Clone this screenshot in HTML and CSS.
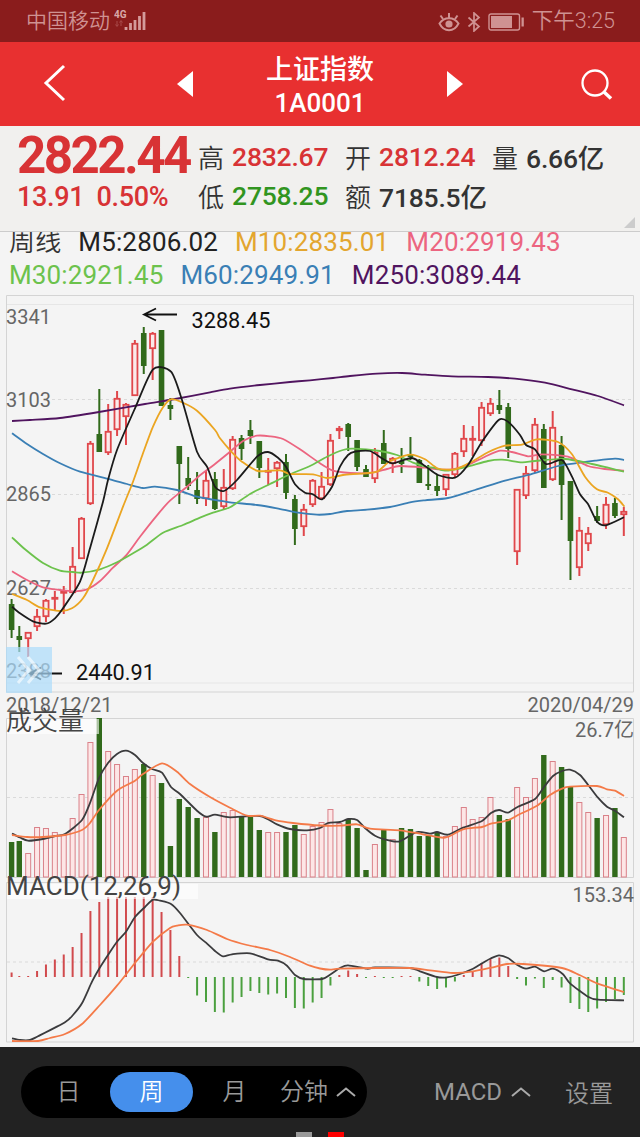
FILE: index.html
```
<!DOCTYPE html>
<html lang="zh-CN">
<head>
    <meta charset="UTF-8">
    <meta name="viewport" content="width=device-width, initial-scale=1.0">
    <title>上证指数 1A0001</title>
    <link rel="stylesheet" href="styles.css">
</head>
<body>
    <div class="status-bar">
        <div class="status-left">
            <span>中国移动</span>
            <svg class="signal" width="34" height="24" viewBox="0 0 34 24">
                <text x="0" y="10" class="signal-type">4G</text>
                <path d="M3 13v5M1.500 16.500l1.500 2 1.500-2M7 18v-5M5.500 14.500l1.500-2 1.500 2" class="signal-data"/>
                <path d="M12 19v3M16.500 15v7M21 12v10M25.500 8v14M30 4v18" class="signal-bars"/>
            </svg>
        </div>
        <div class="status-right">
            <svg width="22" height="20" viewBox="0 0 22 20" fill="none" stroke="currentColor" stroke-width="2">
                <path d="M1.500 11.500C6 4.500 16 4.500 20.500 11.500C16 20.500 6 20.500 1.500 11.500Z"/>
                <circle cx="11" cy="12" r="3.600" fill="currentColor" stroke="none"/>
                <path d="M11 6V1M5 7L2.500 3.500M17 7l2.500-3.500"/>
            </svg>
            <svg width="14" height="20" viewBox="0 0 14 20" fill="none" stroke="currentColor" stroke-width="1.700">
                <path d="M1.500 5.500L12 14.500L7 19V1L12 5.500L1.500 14.500"/>
            </svg>
            <svg class="battery" width="37" height="18" viewBox="0 0 37 18">
                <rect x="1" y="1" width="30.500" height="16" rx="2" fill="none" stroke="currentColor" stroke-width="1.400"/>
                <rect x="3" y="3" width="21" height="12" fill="currentColor"/>
                <rect x="33.500" y="4.500" width="2.300" height="9" fill="currentColor"/>
            </svg>
            <span>下午3:25</span>
        </div>
    </div>

    <div class="title-bar">
        <svg class="back" width="24" height="40" viewBox="0 0 24 40"><path d="M21 3L3 20L21 37"/></svg>
        <svg class="prev" width="18" height="28" viewBox="0 0 18 28"><path d="M17 1v26L1 14z"/></svg>
        <div class="title">
            <div class="title-name">上证指数</div>
            <div class="title-code">1A0001</div>
        </div>
        <svg class="next" width="18" height="28" viewBox="0 0 18 28"><path d="M1 1v26L17 14z"/></svg>
        <svg class="search" width="34" height="34" viewBox="0 0 34 34">
            <circle cx="15" cy="15" r="12.500"/>
            <path d="M24 24l7 6.500" class="handle"/>
        </svg>
    </div>

    <div class="quote">
        <div class="quote-main">
            <div class="price">2822.44</div>
            <div class="change"><span>13.91</span><span>0.50%</span></div>
        </div>
        <div class="quote-grid">
            <div class="item"><span>高</span><b class="up">2832.67</b></div>
            <div class="item"><span>开</span><b class="up">2812.24</b></div>
            <div class="item"><span>量</span><b>6.66亿</b></div>
            <div class="item"><span>低</span><b class="down">2758.25</b></div>
            <div class="item"><span>额</span><b>7185.5亿</b></div>
        </div>
        <div class="expand"></div>
    </div>

    <div class="legend">
        <div class="legend-row">
            <span class="period">周线</span>
            <span class="m5">M5:2806.02</span>
            <span class="m10">M10:2835.01</span>
            <span class="m20">M20:2919.43</span>
        </div>
        <div class="legend-row">
            <span class="m30">M30:2921.45</span>
            <span class="m60">M60:2949.91</span>
            <span class="m250">M250:3089.44</span>
        </div>
    </div>

    <div class="charts">
        <svg id="price" class="chart" width="640" height="423" viewBox="0 295 640 423">
            <path class="frame" d="M6.500 295.500H633.500V692H6.500z"/>
            <path class="rule" d="M7 304.500H633M7 683H633"/>
            <path class="dash" d="M52 399.500H633M52 494.500H633M52 588.500H633"/>
            <text class="axis" x="6" y="323.500">3341</text>
            <text class="axis" x="6" y="406.500">3103</text>
            <text class="axis" x="6" y="501">2865</text>
            <text class="axis" x="6" y="595">2627</text>
            <text class="axis" x="6" y="678">2388</text>
            <g id="candles"></g>
            <g id="averages"></g>
            <path class="arrow" d="M177 314.500H144M156 308.500L144 314.500L156 320.500"/>
            <text class="mark" x="191.500" y="327.500">3288.45</text>
            <path class="arrow" d="M62 673.500H30M41 667.500L30 673.500L41 679.500"/>
            <text class="mark" x="76" y="680">2440.91</text>
            <rect class="drawer" x="6" y="647" width="46" height="46"/>
            <path class="drawer-icon" d="M18 657L29 670L18 683M28 657L39 670L28 683"/>
            <text class="axis" x="6" y="711.500">2018/12/21</text>
            <text class="axis end" x="634" y="711.500">2020/04/29</text>
        </svg>
        <svg id="volume" class="chart" width="640" height="164" viewBox="0 718 640 164">
            <path class="frame" d="M6.500 718.500H633.500V877.500H6.500z"/>
            <path class="dash" d="M7 797.500H633"/>
            <g id="volumes"></g>
            <rect class="label-back" x="7" y="719" width="92" height="15"/>
            <text class="label thin" x="6" y="730">成交量</text>
            <text class="axis end" x="634" y="736.500">26.7亿</text>
        </svg>
        <svg id="macd" class="chart" width="640" height="165" viewBox="0 882 640 165">
            <path class="frame" d="M6.500 882.500H633.500V1042H6.500z"/>
            <path class="dash" d="M7 962H633"/>
            <g id="macds"></g>
            <rect class="label-back" x="7" y="884" width="191" height="15"/>
            <text class="label" x="6" y="895">MACD(12,26,9)</text>
            <text class="axis end" x="634" y="901.500">153.34</text>
        </svg>
    </div>

    <div class="footer">
        <div class="periods">
            <div class="period-tab">日</div>
            <div class="period-tab active">周</div>
            <div class="period-tab">月</div>
            <div class="period-tab wide">分钟
                <svg class="caret" width="20" height="10" viewBox="0 0 20 10"><path d="M1 9L10 1.500L19 9"/></svg>
            </div>
        </div>
        <div class="indicator">MACD
            <svg class="caret" width="20" height="10" viewBox="0 0 20 10"><path d="M1 9L10 1.500L19 9"/></svg>
        </div>
        <div class="settings">设置</div>
        <div class="pages"><i></i><i class="current"></i></div>
    </div>

    <script src="chart.js"></script>
</body>
</html>
```
FILE: styles.css
```
body {
    margin: 0;
    width: 640px;
    height: 1137px;
    overflow: hidden;
    background-color: #f4f4f4;
    font-family: Roboto, "Noto Sans CJK SC", sans-serif;
    color: #333;
}
svg {
    display: block;
    flex: none;
}
.status-bar {
    height: 42px;
    display: flex;
    justify-content: space-between;
    align-items: center;
    padding: 2px 25px 0 26px;
    box-sizing: border-box;
    background-color: #8a1c1c;
    color: #cf9292;
    font-size: 21px;
    line-height: 30px;
    font-weight: 350;
}
.status-left {
    display: flex;
    align-items: center;
    gap: 4px;
}
.status-left span,
.status-right span {
    margin-top: -2px;
}
.status-right {
    display: flex;
    align-items: center;
    gap: 7px;
}
.status-right span { font-size: 21.5px; }
.signal { margin-top: -5px; }
.signal-type {
    font-size: 10px;
    font-weight: 700;
    fill: #d9a8a8;
}
.signal-data {
    fill: none;
    stroke: #a84a4a;
}
.signal-bars {
    stroke: #d49b9b;
    stroke-width: 2.8;
}
.title-bar {
    height: 84px;
    display: flex;
    align-items: center;
    background-color: #e83030;
    color: white;
}
.back {
    margin-left: 43px;
    margin-top: -2px;
    fill: none;
    stroke: white;
    stroke-width: 3;
}
.prev {
    margin-left: 109px;
    fill: white;
}
.title {
    width: 252px;
    padding-top: 5px;
    text-align: center;
}
.title-name {
    font-size: 27px;
    line-height: 33px;
    font-weight: 500;
}
.title-code {
    font-size: 26px;
    line-height: 32px;
    font-weight: 500;
}
.next { fill: white; }
.search {
    margin-left: 116px;
    margin-top: 2px;
    fill: none;
    stroke: white;
    stroke-width: 2.3;
}
.handle { stroke-width: 3.5; }
.quote {
    position: relative;
    height: 106px;
    display: flex;
    box-sizing: border-box;
    padding: 11px 0 0 17px;
    background-color: #f1f0ee;
    border-bottom: 1px solid #ccc;
}
.quote-main {
    width: 181px;
    color: #d83335;
}
.price {
    font-size: 51px;
    line-height: 38px;
    font-weight: 700;
    letter-spacing: -2.5px;
}
.change {
    display: flex;
    gap: 12px;
    font-size: 27px;
    line-height: 40px;
    margin-top: 2px;
    font-weight: 500;
    letter-spacing: -0.3px;
}
.quote-grid {
    display: grid;
    grid-template-columns: 147px 147px 120px;
    grid-template-rows: 39px 39px;
}
.item {
    display: flex;
    align-items: center;
    gap: 8px;
    white-space: nowrap;
    font-size: 26px;
}
.item span { font-weight: 350; }
.item b {
    font-size: 26.5px;
    font-weight: 500;
    letter-spacing: -0.2px;
}
.item .up { color: #d83335; }
.item .down { color: #31951f; }
.expand {
    position: absolute;
    right: 5px;
    bottom: 3px;
    border-left: 11px solid transparent;
    border-bottom: 11px solid #ccc;
}
.legend {
    height: 63px;
}
.legend-row {
    display: flex;
    gap: 17px;
    height: 33px;
    line-height: 21px;
    padding-left: 9px;
    font-size: 26px;
    letter-spacing: 0.15px;
    white-space: nowrap;
}
.period { font-weight: 350; }
.m5 { color: #222; }
.m10 { color: #e3a62f; }
.m20 { color: #ec6580; }
.m30 { color: #6cc24c; }
.m60 { color: #3a7fb5; }
.m250 { color: #50145f; }

.chart { overflow: visible; }
.frame {
    fill: none;
    stroke: #d4d4d4;
}
.rule { stroke: #e6e6e6; }
.dash {
    stroke: #dadada;
    stroke-dasharray: 3 3;
}
.axis {
    font-size: 20px;
    fill: #666;
}
.end { text-anchor: end; }
.mark {
    font-size: 21.7px;
    fill: #111;
}
.label {
    font-size: 26px;
    fill: #444;
}
.thin { font-weight: 350; }
.label-back {
    fill: white;
    opacity: 0.6;
}
.arrow {
    fill: none;
    stroke: #111;
    stroke-width: 1.8;
}
.drawer {
    fill: #abdcfb;
    opacity: 0.7;
}
.drawer-icon {
    fill: none;
    stroke: white;
    stroke-width: 3;
    opacity: 0.6;
}
.up-bar {
    fill: #fbeaea;
    stroke: #e0474b;
    stroke-width: 1.8;
}
.up-wick { stroke: #e0474b; stroke-width: 2; }
.down-bar { fill: #316a1b; }
.down-wick { stroke: #316a1b; stroke-width: 2; }
.up-volume {
    fill: #fde6e6;
    stroke: #d98189;
}
.up-macd { stroke: #d14a4d; stroke-width: 2; }
.down-macd { stroke: #4ba03f; stroke-width: 2; }
.line {
    fill: none;
    stroke-width: 1.8;
    stroke-linejoin: round;
}

.footer {
    position: relative;
    height: 90px;
    display: flex;
    align-items: center;
    box-sizing: border-box;
    padding: 0 0 1px 21px;
    background-color: #222;
    color: #999;
    font-size: 24px;
    font-weight: 350;
}
.periods {
    width: 346px;
    height: 52px;
    display: flex;
    align-items: center;
    box-sizing: border-box;
    padding-left: 6px;
    border-radius: 26px;
    background-color: #000;
}
.period-tab {
    width: 83px;
    height: 40px;
    line-height: 40px;
    text-align: center;
    border-radius: 20px;
}
.period-tab.active {
    background-color: #458fec;
    color: white;
}
.period-tab.wide {
    display: flex;
    align-items: center;
    gap: 8px;
    padding-left: 4px;
}
.caret {
    fill: none;
    stroke: #aaa;
    stroke-width: 2;
}
.indicator {
    display: flex;
    align-items: center;
    gap: 9px;
    margin-left: 67px;
    font-weight: 400;
}
.settings { margin-left: 34px; }
.pages {
    position: absolute;
    left: 296px;
    bottom: 0;
    display: flex;
    gap: 16px;
}
.pages i {
    width: 16px;
    height: 5px;
    background-color: #999;
}
.pages .current { background-color: #f00; }
```
FILE: chart.js
```
const STEP = 8.89;
const LEFT = 10.4;
const VOLUME_BASE = 877;
const MACD_BASE = 977;

// direction (1 up, 0 down), high, body top, body bottom, low
const candles = [
    [0, 599, 604, 630, 638], [0, 626, 636, 640, 652], [1, 632, 632, 639, 657], [1, 609, 616, 627, 631],
    [1, 599, 600, 617, 622], [1, 591, 597, 599, 610], [1, 586, 591, 593, 614], [1, 547, 566, 593, 593],
    [1, 517, 518, 559, 559], [1, 441, 443, 504, 505], [0, 389, 434, 452, 452], [1, 404, 431, 453, 455],
    [1, 391, 398, 430, 436], [1, 403, 404, 417, 445], [1, 340, 343, 396, 396], [0, 327, 333, 366, 374],
    [1, 332, 333, 349, 380], [0, 330, 330, 406, 406], [0, 398, 405, 409, 420], [0, 446, 446, 464, 504],
    [0, 457, 478, 486, 490], [0, 472, 490, 499, 504], [1, 471, 480, 499, 506], [0, 472, 479, 509, 510],
    [1, 469, 487, 507, 509], [1, 436, 439, 489, 490], [0, 435, 438, 449, 460], [0, 420, 430, 436, 444],
    [0, 441, 441, 468, 478], [1, 458, 470, 472, 485], [1, 461, 462, 469, 487], [0, 454, 462, 493, 499],
    [0, 495, 499, 529, 545], [1, 504, 509, 527, 536], [1, 479, 480, 505, 507], [1, 472, 486, 499, 499],
    [1, 434, 440, 485, 486], [1, 426, 428, 431, 439], [0, 423, 424, 437, 451], [0, 440, 440, 467, 471],
    [0, 465, 469, 477, 477], [1, 448, 452, 479, 483], [0, 430, 443, 464, 464], [1, 457, 458, 464, 473],
    [0, 448, 461, 464, 473], [0, 437, 454, 457, 460], [0, 459, 460, 483, 483], [0, 465, 484, 486, 490],
    [0, 475, 486, 491, 496], [1, 474, 474, 490, 496], [1, 452, 453, 475, 477], [1, 425, 438, 452, 457],
    [1, 426, 438, 440, 456], [1, 402, 407, 441, 446], [1, 398, 403, 414, 416], [0, 390, 405, 410, 414],
    [0, 403, 407, 449, 458], [1, 489, 489, 552, 565], [1, 466, 473, 496, 499], [1, 418, 424, 471, 473],
    [0, 424, 429, 488, 488], [1, 411, 427, 480, 481], [0, 436, 445, 485, 520], [0, 481, 481, 541, 580],
    [1, 517, 530, 568, 576], [1, 527, 533, 544, 551], [0, 506, 516, 521, 523], [1, 497, 504, 525, 529],
    [0, 498, 503, 516, 518], [1, 507, 511, 515, 536]
];

const volumes = [
    842, 841, 853, 827, 828, 832, 835, 818, 794, 742, 718, 751, 764, 776, 769, 764, 775, 783, 846, 799,
    807, 818, 817, 832, 812, 810, 816, 817, 830, 832, 832, 832, 825, 834, 826, 822, 809, 823, 819, 828,
    870, 844, 830, 839, 828, 829, 836, 836, 832, 836, 826, 807, 819, 817, 797, 815, 819, 787, 797, 778,
    755, 761, 767, 787, 802, 812, 818, 815, 808, 837
];

const macds = [
    4.5, 1, 1, 6, 12.5, 17.5, 22.5, 30, 44, 66, 75, 80, 80, 80, 80, 80, 80, 65, 47, 21,
    -1, -18.5, -25, -35, -35.5, -25.5, -20, -14, -16, -17.5, -16.5, -21, -31, -31.5, -25.5, -21, -8.5, 2, 6.5, 3,
    -1, 1, -1, -1, 1, 1, -4.5, -9, -12, -10.5, -4.5, 2, 5, 14, 18, 19.5, 11, -2, -8.5, -1.5,
    -11, -3, -10.5, -26, -32, -35, -31.5, -25, -22, -18
];

const averages = {
    '#50145f': '12,421 30,420 60,418 99,412 145,404 175,399 210,392.3 230,388.7 260,385 290,382 310,380.3 333,378 350,376 377,373.6 402,373 425,374.7 452,376.3 488,377 515,378.7 545,382.7 572,389.3 598,396 624,405.3',
    '#3a7fb5': '12,433.3 27,444 43,454 60,463.3 80,471.7 110,479.3 127,484 143,488 155,486.7 177,490 197,496.7 213,499.7 230,502.3 257,505 277,508.3 298,512.7 317,514.7 330,514 347,511 367,509.7 390,507 410,502.3 425,500.3 448,498 475,490 505,480.7 528,475 558,466 575,463.3 595,460.7 615,458.7 624,460',
    '#ec6580': '12,571.3 27,580 43,587.3 60,590 73,591.3 87,589.3 100,581 113,567.7 127,554.3 140,536.7 157,515.3 170,500.7 187,486.7 200,475.3 215,464 227,454.3 243,441 257,435.7 270,436.3 283,439 300,449.3 320,463.3 333,470.7 350,473 370,473 387,469 400,466 425,467.7 438,469.3 452,469.3 468,465 485,456.7 500,450.7 512,452 528,456.3 542,454.3 568,456.7 588,466 605,469 624,470.7',
    '#6cc24c': '12,537.3 25,549.3 43,563 60,570.7 73,572 82,572.7 100,569.3 117,562.3 133,553.3 147,544.7 163,532.7 183,525 200,517.7 213,512.7 230,507.3 250,494 270,484 290,474.3 310,466 327,456.7 343,450 353,448.7 380,451 397,455 413,462.7 425,466.5 435,468 445,470.7 465,467.3 488,461 502,459.7 522,462.3 535,461 565,459 592,464 608,467.7 624,471.7',
    '#eba521': '12,594 27,600 40,607.3 60,611 72,608.3 83,598.3 93,580 107,548.3 123,506.7 133,481.7 143,453.3 153,426.7 163,407.3 171,399.3 183,402.7 197,410.7 215,430 220,438.3 232,452.3 242,461.7 258,471 280,470.3 290,474 313,474.3 327,478 343,475 360,473.7 377,471.7 390,461.3 410,454.7 425,459.3 438,468.5 455,469.3 472,461.7 488,452.3 505,445.7 522,444.7 537,439.3 558,442 572,454.3 585,476.7 597,489.3 608,492.7 618,499.3 624.5,506.7',
    '#1b1b1b': '12,606.7 20,613.3 33,621.3 46,623.7 55,618.3 63,608.3 80,581.7 90,548.3 103,501.7 108,480 117,450 135,408.3 153,369.3 171,371.7 182,400 197,451.7 207,466.7 215,486.7 224,491 237,480 257,456.7 268,452 278,457.7 286,466.7 295,484.3 305,492.7 313,494.3 322,499.3 332,486.7 340,466.7 348,455 355,451.7 370,451 383,459 393,463.3 412,458 425,466 438,475 455,477.7 468,465 482,441.7 499,419.7 508,421.7 520,435 526,445 535,449.3 546,464 562,460 572,476.7 580,494.3 588,504 597,521.7 606,525.3 624,517.3'
};

const volumeLines = {
    '#3b3b3d': '12,833.5 20,837.5 28,840.7 43,839 55,836 65,834 82,820 90,803 99,778 108,763 117,754 126,750.7 135,755 143,763 152,769 162,772.7 171,787 180,794 197,810.7 206,816.7 215,814.7 230,817.3 260,816 277,824.3 290,829 307,830.3 320,828 328,823 340,822 348,819 357,820 365,828 375,835.7 390,840.7 400,841.3 417,832 430,833.7 437,832 448,834.7 463,827.7 482,821 491,813 499,810 508,812.7 518,806.7 535,799 544,787 553,776 562,771 570,769.7 580,775 589,786 598,797.7 607,806.7 615,810.7 624,817.3',
    '#f47a48': '12,835 27,837 43,837 65,835 82,830 90,823 99,810 117,790.7 135,780.7 143,774 162,763.3 177,771.7 190,784 210,797 230,807.7 247,815.7 260,815.7 277,820.7 293,823 320,825.5 340,825.7 357,824.3 370,828.7 400,830.3 423,834.3 445,837.7 463,829.3 482,827 491,823.7 508,820.3 518,815 537,805.7 550,795 562,788.7 570,786.7 597,786 607,789.3 615,790.7 624,796'
};

const macdLines = {
    '#3b3b3d': '12,1038.3 20,1040 30,1040 38,1036.3 65,1022.3 73,1015 82,1003.3 92,981.7 99,969 108,955 117,941.7 126,931.7 135,917 145,907 153,899.7 160,900.7 171,904 180,913 197,935 206,942.7 215,951 223,956.3 232,954.3 250,953.3 268,959.3 278,960.7 287,965.7 295,975 304,979 322,979 330,974.7 340,968 348,965.3 367,968.7 375,967.5 410,968 420,971.3 437,977 447,977.3 457,975 473,968.7 482,963.3 491,958.3 499,955.3 508,958 517,964.7 526,968.7 535,966.7 544,971.3 553,968.7 563,974.3 570,983.3 588,996.7 598,999.7 624,1000.3',
    '#f47a48': '12,1041 38,1041 50,1038 65,1034 82,1024 100,1005 117,985.7 135,963 153,941.7 170,928 177,925.7 187,924.7 207,930 227,939 247,945 270,950 290,957 310,965.7 320,968.5 330,969.7 340,968.7 377,968 410,968 430,970.3 453,973 473,971.3 491,967.7 507,964 523,964 562,968 580,975.3 597,983.3 624,992'
};

function draw(group, tag, attrs) {
    const el = document.createElementNS('http://www.w3.org/2000/svg', tag);
    for (const key in attrs) el.setAttribute(key, attrs[key]);
    document.getElementById(group).appendChild(el);
}

function vertical(group, x, from, to, cls) {
    draw(group, 'line', { x1: x, x2: x, y1: from, y2: to, class: cls });
}

// rounds the corners between the points without overshooting them much
function smooth(text) {
    const p = text.split(' ').map(pair => pair.split(',').map(Number));
    let d = `M${p[0]}`;
    for (let i = 0; i < p.length - 1; i++) {
        const before = p[i - 1] || p[i];
        const a = p[i];
        const b = p[i + 1];
        const after = p[i + 2] || b;
        const c1 = [a[0] + (b[0] - before[0]) / 8, a[1] + (b[1] - before[1]) / 8];
        const c2 = [b[0] - (after[0] - a[0]) / 8, b[1] - (after[1] - a[1]) / 8];
        d += `C${c1} ${c2} ${b}`;
    }
    return d;
}

function drawLines(group, lines) {
    for (const color in lines) {
        draw(group, 'path', { d: smooth(lines[color]), stroke: color, class: 'line' });
    }
}

candles.forEach(([up, high, top, bottom, low], i) => {
    const x = LEFT + STEP * i + (i === 0 ? 1.2 : 0);
    const height = Math.max(bottom - top, 2);

    vertical('candles', x, high, low, up ? 'up-wick' : 'down-wick');
    if (up) {
        draw('candles', 'rect', { x: x - 2.6, y: top + 0.8, width: 5.2, height: Math.max(height - 1.6, 1), class: 'up-bar' });
        draw('volumes', 'rect', { x: x - 2.5, y: volumes[i] + 0.5, width: 5, height: VOLUME_BASE - volumes[i] - 0.5, class: 'up-volume' });
    } else {
        draw('candles', 'rect', { x: x - 2.8, y: top, width: 5.6, height: height, class: 'down-bar' });
        draw('volumes', 'rect', { x: x - 2.7, y: volumes[i], width: 5.4, height: VOLUME_BASE - volumes[i], class: 'down-bar' });
    }
    vertical('macds', x, MACD_BASE, MACD_BASE - macds[i], macds[i] > 0 ? 'up-macd' : 'down-macd');
});

drawLines('averages', averages);
drawLines('volumes', volumeLines);
drawLines('macds', macdLines);
```
